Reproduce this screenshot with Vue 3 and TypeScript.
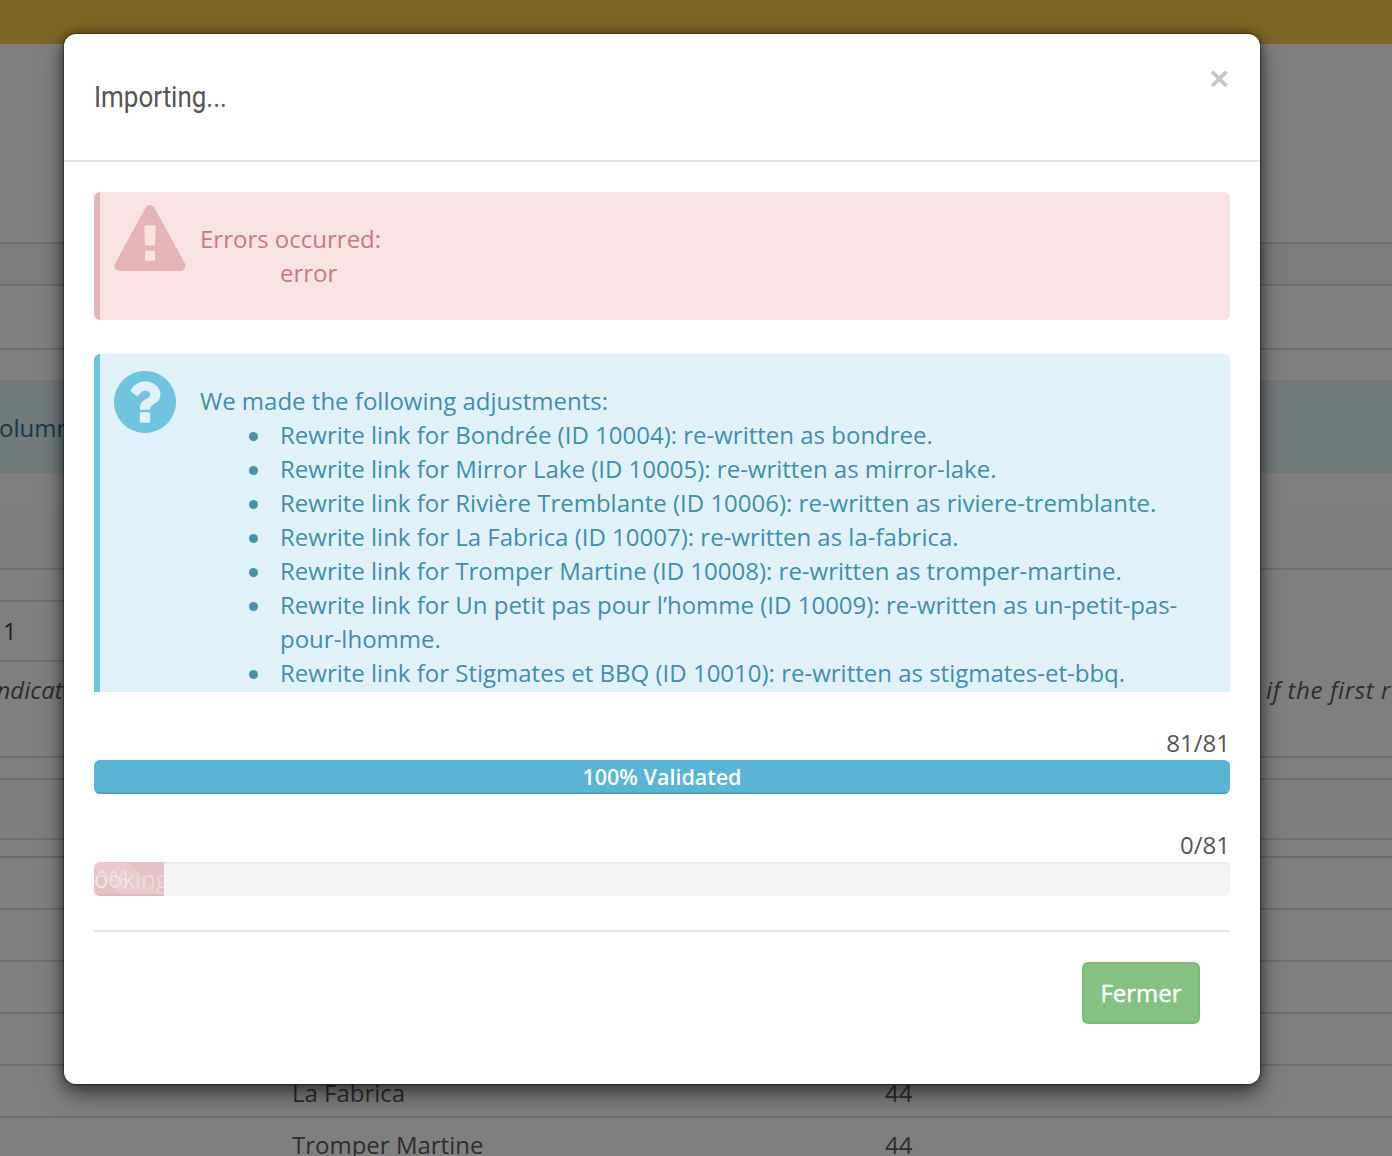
<script setup lang="ts">
const adjustments: string[] = [
  'Rewrite link for Bondrée (ID 10004): re-written as bondree.',
  'Rewrite link for Mirror Lake (ID 10005): re-written as mirror-lake.',
  'Rewrite link for Rivière Tremblante (ID 10006): re-written as riviere-tremblante.',
  'Rewrite link for La Fabrica (ID 10007): re-written as la-fabrica.',
  'Rewrite link for Tromper Martine (ID 10008): re-written as tromper-martine.',
  'Rewrite link for Un petit pas pour l’homme (ID 10009): re-written as un-petit-pas-pour-lhomme.',
  'Rewrite link for Stigmates et BBQ (ID 10010): re-written as stigmates-et-bbq.',
]
</script>

<template>
  <div class="page">
    <div class="topbar"></div>
    <div class="row h200"></div>
    <div class="row tinted h42"></div>
    <div class="row h64"></div>
    <div class="row plain h30"></div>
    <div class="row band h93"><span class="band-text">Column</span></div>
    <div class="row plain h37"></div>
    <div class="row green h60"></div>
    <div class="row short h32"></div>
    <div class="row short num h60"><span>1</span></div>
    <div class="row note h96">
      <span class="note-left">Indicates</span>
      <span class="note-right">if the first row</span>
    </div>
    <div class="row h22"></div>
    <div class="row green h60"></div>
    <div class="row strong h18"></div>
    <div class="row h52"></div>
    <div class="row h52"></div>
    <div class="row h52"></div>
    <div class="row h52"></div>
    <div class="row data h52"><span>La Fabrica</span><span>44</span></div>
    <div class="row data h52"><span>Tromper Martine</span><span>44</span></div>

    <div class="overlay"></div>

    <section class="modal">
      <header class="modal-header">
        <h4><span>Importing...</span></h4>
        <span class="close">×</span>
      </header>
      <div class="modal-body">
        <div class="alert alert-error">
          <svg class="icon-warning" viewBox="0 0 1792 1664" aria-hidden="true">
            <path fill-rule="evenodd" d="M1024 1375v-190q0-14-9.5-23.5t-22.5-9.5h-192q-13 0-22.5 9.5t-9.5 23.5v190q0 14 9.5 23.5t22.5 9.5h192q13 0 22.5-9.5t9.5-23.5zm-2-374l18-459q0-12-10-19-13-11-24-11h-220q-11 0-24 11-10 7-10 21l17 457q0 10 10 16.5t24 6.5h185q14 0 23.5-6.5t10.5-16.5zm-14-934l768 1408q35 63-2 126-17 29-46.5 46t-63.5 17h-1536q-34 0-63.5-17t-46.5-46q-37-63-2-126l768-1408q17-31 47-49t65-18 65 18 47 49z" />
          </svg>
          <div class="alert-text error-text">
            <div>Errors occurred:</div>
            <div class="indent">error</div>
          </div>
        </div>

        <div class="alert alert-info">
          <span class="icon-slot">
            <svg class="icon-question" viewBox="128 128 1536 1536" aria-hidden="true">
              <path fill-rule="evenodd" d="M1024 1376v-192q0-14-9-23t-23-9h-192q-14 0-23 9t-9 23v192q0 14 9 23t23 9h192q14 0 23-9t9-23zm256-672q0-88-55.5-163t-138.5-116-170-41q-243 0-371 213-15 24 8 42l132 100q7 6 19 6 16 0 25-12 53-68 86-92 34-24 86-24 48 0 85.5 26t37.5 59q0 38-20 61t-68 45q-63 28-115.5 86.5t-52.5 125.5v36q0 14 9 23t23 9h192q14 0 23-9t9-23q0-19 21.5-49.5t54.5-49.5q32-18 49-28.5t46-35 44.5-48 28-60.5 12.5-81zm384 192q0 209-103 385.5t-279.5 279.5-385.5 103-385.5-103-279.5-279.5-103-385.5 103-385.5 279.5-279.5 385.5-103 385.5 103 279.5 279.5 103 385.5z" />
            </svg>
          </span>
          <div class="alert-text info-text">
            <div>We made the following adjustments:</div>
            <ul>
              <li v-for="item in adjustments" :key="item">{{ item }}</li>
            </ul>
          </div>
        </div>

        <div class="count">81/81</div>
        <div class="progress">
          <div class="bar bar-info">100% Validated</div>
        </div>

        <div class="count">0/81</div>
        <div class="progress progress-empty">
          <div class="bar bar-danger" :style="{ width: '70px' }"></div>
          <span class="ghost ghost-a">Booking</span>
          <span class="ghost ghost-b">0%</span>
        </div>

        <hr class="divider" />

        <div class="footer">
          <button class="btn" type="button">Fermer</button>
        </div>
      </div>
    </section>
  </div>
</template>

<style scoped>
.page {
  position: relative;
  width: 1392px;
  height: 1156px;
  overflow: hidden;
  background: #ffffff;
  font-family: "Open Sans", "Liberation Sans", sans-serif;
  font-size: 24px;
  line-height: 34px;
  color: #555555;
}
.topbar {
  height: 44px;
  background: #fbcd4a;
}
.row {
  box-sizing: border-box;
  border-bottom: 2px solid #dddddd;
  color: #5a5a5a;
}
.h18 { height: 18px; }
.h22 { height: 22px; }
.h30 { height: 30px; }
.h32 { height: 32px; }
.h37 { height: 37px; }
.h42 { height: 42px; }
.h52 { height: 52px; }
.h60 { height: 60px; }
.h64 { height: 64px; }
.h93 { height: 93px; }
.h96 { height: 96px; }
.h200 { height: 200px; }
.plain {
  border-bottom-color: transparent;
}
.short {
  width: 700px;
  border-bottom-color: #dde2dd;
}
.tinted {
  background: #f6f6fa;
  border-bottom-color: #dcdce4;
}
.band {
  display: flex;
  align-items: center;
  padding-top: 3px;
  background: #e3f2f6;
  border-bottom: 0;
}
.band-text {
  margin-left: -16px;
  color: #31708f;
}
.green {
  background: #fbfefc;
  border-bottom-color: #dde2dd;
}
.num {
  display: flex;
  align-items: center;
  padding-left: 3px;
  color: #444444;
}
.note {
  display: grid;
  grid-template-columns: 1266px 1fr;
  align-items: start;
  font-style: italic;
  line-height: 56px;
  color: #5c5c5c;
  white-space: nowrap;
}
.note-left {
  margin-left: -10px;
}
.note-right {
  letter-spacing: 0.6px;
}
.strong {
  border-bottom-color: #cfd6e2;
}
.data {
  display: grid;
  grid-template-columns: 593px 1fr;
  align-items: center;
  padding: 4px 0 0 292px;
  color: #5c5c5c;
  white-space: nowrap;
}
.overlay {
  position: absolute;
  inset: 0;
  background: rgba(0, 0, 0, 0.5);
}
.modal {
  position: absolute;
  top: 34px;
  left: 64px;
  width: 1196px;
  height: 1050px;
  background: #ffffff;
  border-radius: 12px;
  box-shadow: 0 0 0 1px rgba(0, 0, 0, 0.3), 0 0 12px rgba(0, 0, 0, 0.45), 0 10px 22px rgba(0, 0, 0, 0.5);
}
.modal-header {
  position: relative;
  height: 126px;
  border-bottom: 2px solid #e5e5e5;
}
.modal-header h4 {
  margin: 0;
  padding: 46px 0 0 30px;
  font-family: Roboto, "Liberation Sans", sans-serif;
  font-size: 29px;
  font-weight: 400;
  line-height: 34px;
  color: #555555;
}
.modal-header h4 span {
  display: inline-block;
  transform: scaleX(0.895);
  transform-origin: left center;
}
.close {
  position: absolute;
  top: 24px;
  right: 31px;
  font-family: "Liberation Sans", sans-serif;
  font-size: 34px;
  font-weight: 700;
  line-height: 40px;
  color: #c6c6c6;
}
.modal-body {
  padding: 30px 30px 0;
}
.alert {
  display: flex;
  box-sizing: border-box;
  border-left: 6px solid;
  border-radius: 6px;
}
.alert-error {
  height: 128px;
  margin-bottom: 34px;
  padding: 13px 14px 30px;
  gap: 14px;
  background: #f9e2e4;
  border-left-color: #e4b4b8;
}
.alert-info {
  height: 338px;
  padding: 17px 14px 0;
  gap: 14px;
  overflow: hidden;
  background: #e1f1f8;
  border-left-color: #6fc4df;
  border-radius: 6px 6px 0 0;
}
.icon-warning {
  flex: none;
  display: block;
  width: 72px;
  height: 66px;
  fill: #e4b4b8;
}
.icon-slot {
  flex: none;
  display: block;
  width: 72px;
}
.icon-question {
  display: block;
  width: 62px;
  height: 62px;
  fill: #6fc4df;
}
.alert-text {
  flex: 1;
  min-width: 0;
}
.error-text {
  margin-top: 17px;
  color: #c67a80;
}
.indent {
  padding-left: 80px;
}
.info-text {
  margin-top: 13px;
  color: #3f8fab;
}
.info-text ul {
  margin: 0;
  padding: 0 30px 0 80px;
  list-style: none;
}
.info-text li {
  position: relative;
}
.info-text li::before {
  content: "";
  position: absolute;
  top: 14px;
  left: -31px;
  width: 9px;
  height: 9px;
  border-radius: 50%;
  background: #4293ae;
}
.count {
  margin-top: 34px;
  text-align: right;
  color: #555555;
}
.progress {
  position: relative;
  height: 34px;
  overflow: hidden;
  border-radius: 6px;
  background: #f4f4f4;
  box-shadow: inset 0 2px 2px rgba(0, 0, 0, 0.06);
}
.bar {
  box-sizing: border-box;
  height: 34px;
  text-align: center;
  color: #ffffff;
  font-size: 21.5px;
  font-weight: 600;
  line-height: 34px;
}
.bar-info {
  background: #59b5d3;
  border-bottom: 2px solid #4aa3bf;
}
.bar-danger {
  background-color: #e5c2c5;
  background-image: linear-gradient(
    45deg,
    rgba(255, 255, 255, 0.15) 25%,
    transparent 25%,
    transparent 50%,
    rgba(255, 255, 255, 0.15) 50%,
    rgba(255, 255, 255, 0.15) 75%,
    transparent 75%
  );
  background-size: 80px 80px;
  background-position: -6px 0;
  border-bottom: 2px solid #e0babd;
}
.ghost {
  position: absolute;
  top: 0;
  color: rgba(255, 255, 255, 0.35);
  font-size: 24px;
  line-height: 34px;
  white-space: nowrap;
}
.ghost-a {
  left: -16px;
}
.ghost-b {
  left: 1px;
}
.divider {
  height: 2px;
  margin: 34px 0 30px;
  border: 0;
  background: #e5e5e5;
}
.footer {
  display: flex;
  justify-content: flex-end;
  padding-right: 30px;
}
.btn {
  box-sizing: border-box;
  width: 118px;
  height: 62px;
  padding: 0;
  border: 2px solid #7cba79;
  border-radius: 6px;
  background: #85c182;
  color: #ffffff;
  font-family: "Open Sans", "Liberation Sans", sans-serif;
  font-size: 24px;
  font-weight: 400;
  -webkit-text-stroke: 0.4px #ffffff;
  line-height: 34px;
}
</style>

<style>
html,
body {
  margin: 0;
  background: #ffffff;
}
</style>
